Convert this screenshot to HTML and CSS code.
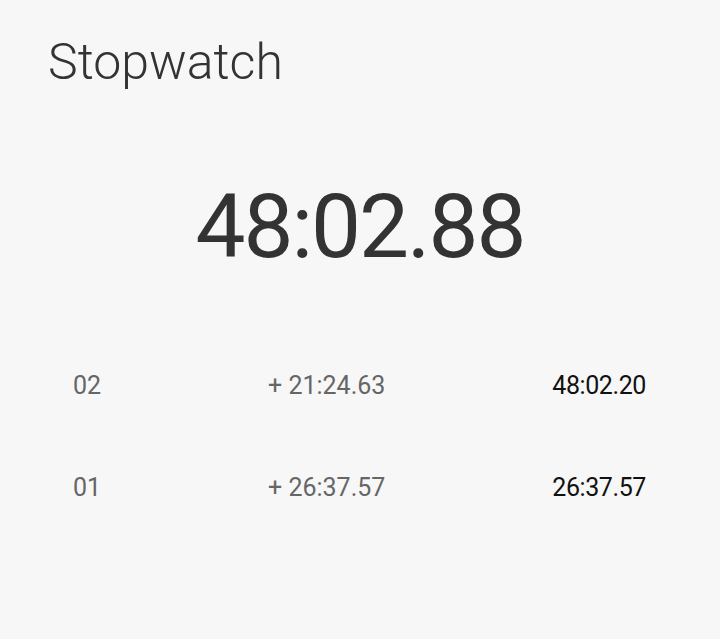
FILE: index.html
```html
<!DOCTYPE html>
<html>
<head>
<meta charset="utf-8">
<link rel="stylesheet" href="styles.css">
</head>
<body>
<div class="app">
  <h1 class="title">Stopwatch</h1>
  <div class="timer">48:02.88</div>
  <div class="laps">
    <div class="lap">
      <span class="lap-no">02</span>
      <span class="lap-diff">+ 21:24.63</span>
      <span class="lap-total">48:02.20</span>
    </div>
    <div class="lap">
      <span class="lap-no">01</span>
      <span class="lap-diff">+ 26:37.57</span>
      <span class="lap-total">26:37.57</span>
    </div>
  </div>
</div>
</body>
</html>
```
FILE: styles.css
```css
html, body {
  margin: 0;
  padding: 0;
  background: #f7f7f7;
}
body {
  font-family: Roboto, "Noto Sans", sans-serif;
  width: 720px;
  height: 639px;
  overflow: hidden;
}
.app {
  padding: 0 48px;
}
.title {
  margin: 0;
  padding-top: 28px;
  font-size: 50px;
  font-weight: 300;
  line-height: 68px;
  color: #333;
}
.timer {
  margin-top: 76px;
  text-align: center;
  font-size: 89px;
  font-weight: 400;
  line-height: 110px;
  color: #333;
  letter-spacing: -2px;
}
.laps {
  margin-top: 52px;
}
.lap {
  display: grid;
  grid-template-columns: 195px 1fr auto;
  align-items: center;
  height: 102px;
  padding: 0 26px 0 25px;
  font-size: 25px;
}
.lap-no {
  color: #666;
}
.lap-diff {
  color: #666;
}
.lap-total {
  color: #111;
  text-align: right;
  letter-spacing: -0.4px;
}
```
